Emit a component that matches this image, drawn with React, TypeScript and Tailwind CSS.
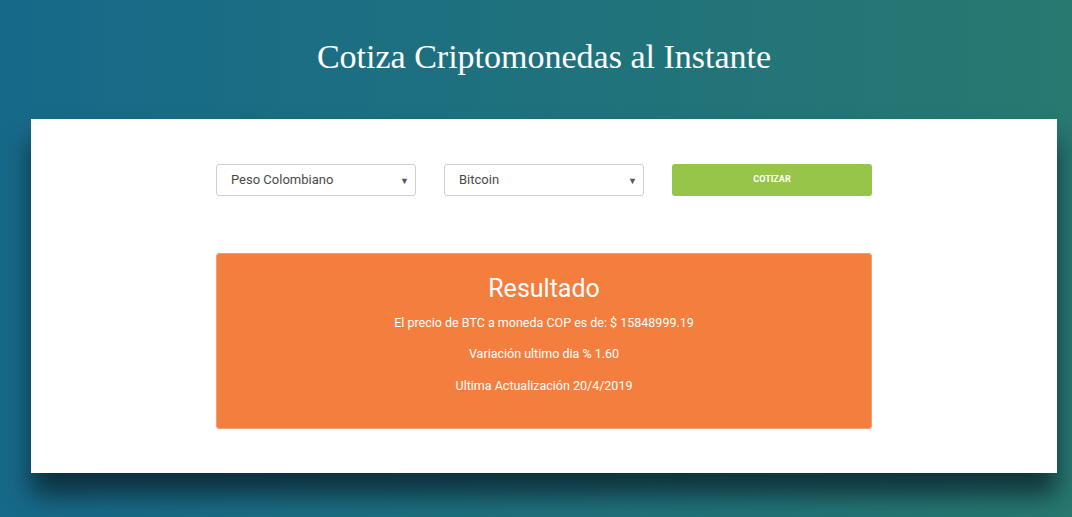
import { FC } from "react";

const Select: FC<{ label: string }> = ({ label }) => (
  <div className="relative flex h-[32px] w-[200px] items-center rounded-[3px] border border-[#d0d0d0] bg-white pl-[14px] text-[13px] text-[#4a4a4a]">
    {label}
    <span className="absolute right-[6px] top-[10px] text-[9px] text-[#555]">▼</span>
  </div>
);

const App: FC = () => {
  return (
    <div
      className="min-h-[517px] w-full bg-linear-to-r from-[#17698a] to-[#287970] pb-[44px] pl-[31px] pr-[15px]"
      style={{ fontFamily: "Roboto, 'Liberation Sans', sans-serif" }}
    >
      <h1 className="pt-[37px] pb-[42px] text-center text-[34px] leading-[40px] text-white [font-family:'Liberation_Serif',serif]">
        Cotiza Criptomonedas al Instante
      </h1>
      <div className="flex h-[354px] flex-col items-center bg-white pt-[45px] shadow-[0_22px_24px_rgba(10,30,40,0.75)]">
        <div className="flex gap-[28px]">
          <Select label="Peso Colombiano" />
          <Select label="Bitcoin" />
          <button className="h-[32px] w-[200px] rounded-[3px] bg-[#96c54a] text-[9px] font-bold text-white">
            COTIZAR
          </button>
        </div>
        <div className="mt-[57px] flex h-[176px] w-[656px] flex-col items-center rounded-[3px] border border-[#f0a070] bg-[#f47e3e] pt-[20px] text-white">
          <h2 className="text-[25px] leading-[30px]">Resultado</h2>
          <p className="mt-[11px] text-[12.5px] leading-[16px]">
            El precio de BTC a moneda COP es de: $ 15848999.19
          </p>
          <p className="mt-[15px] text-[12.5px] leading-[16px]">Variación ultimo dia % 1.60</p>
          <p className="mt-[16px] text-[12.5px] leading-[16px]">Ultima Actualización 20/4/2019</p>
        </div>
      </div>
    </div>
  );
};

export default App;
